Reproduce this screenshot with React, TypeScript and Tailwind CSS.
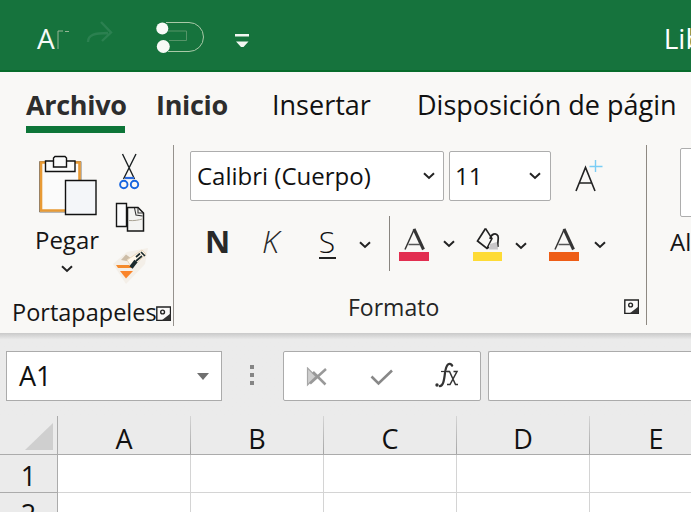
import React from "react";

const FONT = "font-['Open_Sans','Noto_Sans',sans-serif]";

function Chevron({ className = "" }: { className?: string }) {
  return (
    <svg className={`block shrink-0 ${className}`} width="12" height="8" viewBox="0 0 12 8" fill="none">
      <path d="M1 1.3 L6 6 L11 1.3" stroke="#222" strokeWidth="2" />
    </svg>
  );
}

function Launcher() {
  return (
    <svg className="block shrink-0" width="15" height="15" viewBox="0 0 15 15">
      <path d="M.8 14.5V1H14.5V14.5Z" fill="#fbfaf9" stroke="#222" strokeWidth="1.4" />
      <circle cx="6.6" cy="6" r="1.9" fill="none" stroke="#222" strokeWidth="1.4" />
      <path d="M5.5 14.5 L14.5 7.5 V14.5Z" fill="#333" />
    </svg>
  );
}

function TitleBar() {
  return (
    <header className="flex h-[72px] w-full items-start overflow-hidden border-b-2 border-[#076c2b] bg-[#16733d]">
      <span className="ml-[37px] mt-[8px] w-[19px] text-[28px] font-medium leading-[60px] text-[#f7faf7]">A</span>
      <svg className="mt-[15px] ml-[2px] block shrink-0" width="196" height="42" viewBox="58 15 196 42" fill="none">
        <path d="M59 49V31H64M66 31.5h4" stroke="#a5bd9f" strokeWidth=".9" />
        <path d="M89 42C89 35 95 33 109 33M102 22L112 32.5L103 41" stroke="#2b8050" strokeWidth="2.4" />
        <path d="M167 22.5H190A14.5 14.5 0 0 1 190 51.5H169" stroke="#a9c9a8" strokeWidth="1" />
        <path d="M169 31H187.500V40.500H170" stroke="#569569" strokeWidth="1" />
        <circle cx="163.300" cy="28.500" r="6" fill="#f8faf7" />
        <circle cx="164.300" cy="46.500" r="6.500" fill="#f8faf7" />
        <path d="M236 34h14v2.500h-14ZM237 41.500h12.500L244.500 47h-2.500Z" fill="#f2f7f2" />
      </svg>
      <span className="ml-[411px] mt-[8px] whitespace-nowrap text-[28px] leading-[60px] text-white">Libro1</span>
    </header>
  );
}

function Tabs() {
  return (
    <nav className="flex h-[68px] pt-[12px] text-[28px] leading-[42px] text-[#111]">
      <div className="ml-[26px] flex w-[99px] flex-col whitespace-nowrap">
        <span className="h-[42px] text-[27px] font-bold tracking-[-0.3px] text-[#2d2d2d]">Archivo</span>
        <i className="block h-[7px] bg-[#0d7538]" />
      </div>
      <span className="ml-[31px] w-[73px] whitespace-nowrap text-[27px] font-bold tracking-[-0.3px] text-[#2d2d2d]">Inicio</span>
      <span className="ml-[43px] w-[103px] whitespace-nowrap text-[27px]">Insertar</span>
      <span className="ml-[42px] whitespace-nowrap text-[27px]">Disposición de págin</span>
    </nav>
  );
}

function ClipboardGroup() {
  return (
    <section className="flex w-[173px] flex-col">
      <div className="flex h-[151px]">
        <div className="ml-[34px] flex w-[66px] flex-col items-center">
          <svg className="mt-[15px] block" width="62" height="62" viewBox="36 155 62 62">
            <path d="M39.500 161.500H81V212H39.500Z" fill="#fbfbfb" stroke="#777" strokeWidth="1" />
            <path d="M41 162.500H79.500V210.500H41Z" fill="none" stroke="#e89a35" strokeWidth="2.600" />
            <path d="M45.500 161H75V171.500H45.500Z" fill="#fafbfb" stroke="#111" strokeWidth="1.400" />
            <path d="M55 156.500H65L66.500 158V167H53.500V158Z" fill="#fafbfb" stroke="#111" strokeWidth="1.400" />
            <path d="M65.500 180.500H96V214.500H65.500Z" fill="#f4f6f9" stroke="#111" strokeWidth="1.400" />
          </svg>
          <span className="h-[37px] whitespace-nowrap text-[24px] leading-[45px] text-[#151515]">Pegar</span>
          <Chevron className="mt-[11px]" />
        </div>
        <svg className="mt-[12px] ml-[12px] block" width="38" height="134" viewBox="112 152 38 134" fill="none">
          <path d="M122.500 154L134.500 179M136 154L123.500 179" stroke="#1b2022" strokeWidth="1.400" />
          <path d="M125 178H134" stroke="#2a6be0" strokeWidth="2.200" />
          <circle cx="123.800" cy="184.500" r="3.700" stroke="#1765df" strokeWidth="1.900" />
          <circle cx="134.500" cy="184.500" r="3.700" stroke="#1765df" strokeWidth="1.900" />
          <path d="M116.500 203.500H126.500V226.500H116.500Z" fill="#fcfcfc" stroke="#161616" strokeWidth="1.400" />
          <path d="M127.500 207.500H138L143.500 213V231H127.500Z" fill="#f4f4f2" stroke="#161616" strokeWidth="1.500" />
          <path d="M134.500 208L136 215L142.500 216M138 208V213H143" stroke="#333" strokeWidth="1.100" />
          <path d="M129 220.500C134 221 139 220 142 219" stroke="#aaa394" strokeWidth="1" />
          <path d="M113 264L127 252L148 248L145 264L126 284Z" fill="#f4efe8" />
          <path d="M121 260L126 254.500L132 259V262Z" fill="#cdbda7" />
          <path d="M127 260L142 250L146 254L132 268Z" fill="#fff7ea" stroke="#ead8be" strokeWidth="1" />
          <path d="M116 265L129 265L132 268H118Z" fill="#f58b2d" />
          <path d="M120 271H133L126 278.500Z" fill="#fa842a" />
          <path d="M131 267.500L136 261" stroke="#1c2a2c" strokeWidth="4" />
          <path d="M136 261L142 256M136 257L140 253.500M141 252L145 256" stroke="#1c2a2c" strokeWidth="1.700" />
        </svg>
      </div>
      <div className="ml-[12px] flex items-start text-[#151515]">
        <span className="w-[144px] whitespace-nowrap text-[23.500px] leading-[52px]">Portapapeles</span>
        <span className="mt-[20px]"><Launcher /></span>
      </div>
    </section>
  );
}

function ColorLetter({ bar }: { bar: string }) {
  return (
    <svg className="block shrink-0" width="32" height="35" viewBox="0 0 32 35" fill="none">
      <path d="M7 22.500L16.300 2" stroke="#333" strokeWidth="1.500" />
      <path d="M16 2L25.500 22.500" stroke="#353535" strokeWidth="3" />
      <path d="M10.500 17.500H22" stroke="#555" strokeWidth="1.500" />
      <path d="M1 25H31V34H1Z" fill={bar} />
    </svg>
  );
}

function FillBucket() {
  return (
    <svg className="block shrink-0" width="31" height="35" viewBox="0 0 31 35" fill="none">
      <path d="M13.500 1.500L5.500 14L15 21.500L17 20" stroke="#222" strokeWidth="1.700" />
      <path d="M13.500 1.500L20 11.500L15 21" stroke="#222" strokeWidth="1.500" />
      <path d="M18 12C19 7 24 5 26 9C27 12 25 16 26 20" stroke="#222" strokeWidth="1.700" />
      <path d="M18 17L25 15L26 22.500H17Z" fill="#c9c7c9" />
      <path d="M1 25H30V34H1Z" fill="#fedb35" />
    </svg>
  );
}

function FontGroup() {
  return (
    <section className="flex w-[472px] flex-col">
      <div className="flex h-[61px] items-start pt-[11px] text-[24px] text-[#111]">
        <div className="ml-[16px] flex h-[50px] w-[254px] items-center justify-between rounded-[2px] border border-[#adadad] bg-white pr-[8px] pl-[6px]">
          <span className="whitespace-nowrap">Calibri (Cuerpo)</span>
          <Chevron />
        </div>
        <div className="ml-[5px] flex h-[50px] w-[102px] items-center justify-between rounded-[2px] border border-[#adadad] bg-white pr-[9px] pl-[5px]">
          <span>11</span>
          <Chevron />
        </div>
        <svg className="ml-[22px] mt-[8px] block" width="32" height="36" viewBox="572 159 32 36" fill="none">
          <path d="M575 191L584.500 167.500L594 191M578.500 183H590.500" stroke="#222" strokeWidth="1.600" />
          <path d="M594.500 160V172M588.500 166.500H601.500" stroke="#7acdf5" strokeWidth="1.400" />
        </svg>
      </div>
      <div className="flex h-[90px] items-start pt-[15px] text-[#292929]">
        <b className="ml-[31px] w-[25px] text-[31px] leading-[51px]">N</b>
        <i className="ml-[32px] w-[22px] text-[31px] font-light leading-[51px]">K</i>
        <div className="ml-[34px] flex w-[18px] flex-col items-center">
          <span className="h-[41px] text-[30px] font-light leading-[52px] text-[#111]">S</span>
          <i className="block h-[2px] w-[17px] bg-[#222]" />
        </div>
        <Chevron className="mt-[25px] ml-[23px]" />
        <i className="ml-[18px] block h-[55px] w-px bg-[#898580]" />
        <div className="ml-[8px] mt-[11px] flex">
          <ColorLetter bar="#e22e50" />
          <Chevron className="mt-[13px] ml-[13px]" />
          <span className="ml-[17px]"><FillBucket /></span>
          <Chevron className="mt-[15px] ml-[12px]" />
          <span className="ml-[21px]"><ColorLetter bar="#ee5d16" /></span>
          <Chevron className="mt-[14px] ml-[14px]" />
        </div>
      </div>
      <div className="flex items-start">
        <span className="ml-[174px] w-[276px] whitespace-nowrap text-[23px] leading-[52px] text-[#252525]">Formato</span>
        <span className="mt-[18px]"><Launcher /></span>
      </div>
    </section>
  );
}

function FormulaBar() {
  return (
    <div className="flex h-[83px] items-start bg-gradient-to-b from-[#c9c9c9] from-0% via-[#ebebeb] via-8% to-[#ebebeb] pt-[18px]">
      <div className="ml-[6px] flex h-[50px] w-[216px] items-center justify-between border border-[#ababab] bg-white pr-[12px] pl-[12px] text-[27px] text-[#111]">
        <span>A1</span>
        <svg width="12" height="7" viewBox="0 0 12 7"><path d="M0 0H12L6 7Z" fill="#707070" /></svg>
      </div>
      <div className="ml-[28px] mt-[14px] flex w-[4px] flex-col gap-[4px]">
        <i className="block size-[4px] bg-[#858585]" />
        <i className="block size-[4px] bg-[#858585]" />
        <i className="block size-[4px] bg-[#858585]" />
      </div>
      <div className="ml-[29px] flex h-[50px] w-[198px] items-start rounded-[2px] border border-[#ababab] bg-white">
        <svg className="mt-[15px] ml-[22px]" width="88" height="20" viewBox="306 367 88 20" fill="none">
          <path d="M307.500 368L316 376.500L307.500 385Z" fill="#cfcfcf" stroke="#a8a8a8" strokeWidth="1.200" />
          <path d="M310 383.500L326 369M313 372L325.500 384.500" stroke="#999" strokeWidth="2.500" />
          <path d="M371.500 376.500L378.500 383.500L392 370.500" stroke="#888" strokeWidth="2.600" />
        </svg>
        <svg className="mt-[10px] ml-[40px]" width="28" height="27" viewBox="434 362 28 27" fill="none">
          <path d="M452 365C448 361.500 446 366 445 373C444 381 443 387 439 386" stroke="#333" strokeWidth="2.200" />
          <circle cx="437" cy="385" r="1.700" fill="#333" />
          <circle cx="452" cy="365.500" r="1.200" fill="#333" />
          <path d="M441 371.500H449" stroke="#333" strokeWidth="1.200" />
          <path d="M447 371.500H449.500L455.500 384.500H458M447 384.500H450L457 371.500H453.500" stroke="#333" strokeWidth="1.500" />
        </svg>
      </div>
      <div className="ml-[7px] h-[50px] flex-1 rounded-l-[2px] border border-r-0 border-[#ababab] bg-white" />
    </div>
  );
}

function Sheet() {
  const cols = ["A", "B", "C", "D", "E"];
  return (
    <div className="grid grid-cols-[58px_133px_133px_133px_133px_133px] grid-rows-[39px_38px_38px] text-center text-[27px] text-[#111]">
      <div className="flex items-start justify-end border-r border-b border-[#ababab] bg-[#ebebeb] pt-[7px] pr-[4px]">
        <svg width="28" height="27" viewBox="0 0 28 27"><path d="M28 0V27H0Z" fill="#cfcfcf" /></svg>
      </div>
      {cols.map((c) => (
        <div key={c} className="flex border-b border-[#ababab] bg-[#ebebeb]">
          <span className="h-[38px] flex-1 leading-[45px]">{c}</span>
          <i className="block w-px bg-gradient-to-b from-[#d5d5d5] to-[#a5a5a5]" />
        </div>
      ))}
      {[1, 2].map((r) => (
        <React.Fragment key={r}>
          <div className="overflow-hidden border-r border-b border-[#ababab] bg-[#ebebeb] leading-[42px]">{r}</div>
          {cols.map((c) => (
            <div key={c} className="border-r border-b border-[#d4d4d4] bg-white" />
          ))}
        </React.Fragment>
      ))}
    </div>
  );
}

export default function App() {
  return (
    <main className={`h-[512px] w-[691px] overflow-hidden bg-[#f9f8f6] ${FONT}`}>
      <TitleBar />
      <Tabs />
      <div className="flex h-[193px] overflow-hidden">
        <ClipboardGroup />
        <i className="mt-[5px] block h-[181px] w-px shrink-0 bg-[#96928d]" />
        <FontGroup />
        <i className="mt-[5px] block h-[180px] w-px shrink-0 bg-[#8e8982]" />
        <section className="flex flex-1 flex-col overflow-hidden">
          <div className="ml-[33px] mt-[8px] h-[69px] w-[60px] shrink-0 rounded-[2px] border border-[#adadad] bg-white" />
          <span className="ml-[23px] whitespace-nowrap text-[24px] leading-[50px] text-[#151515]">Alinear</span>
        </section>
      </div>
      <FormulaBar />
      <Sheet />
    </main>
  );
}
